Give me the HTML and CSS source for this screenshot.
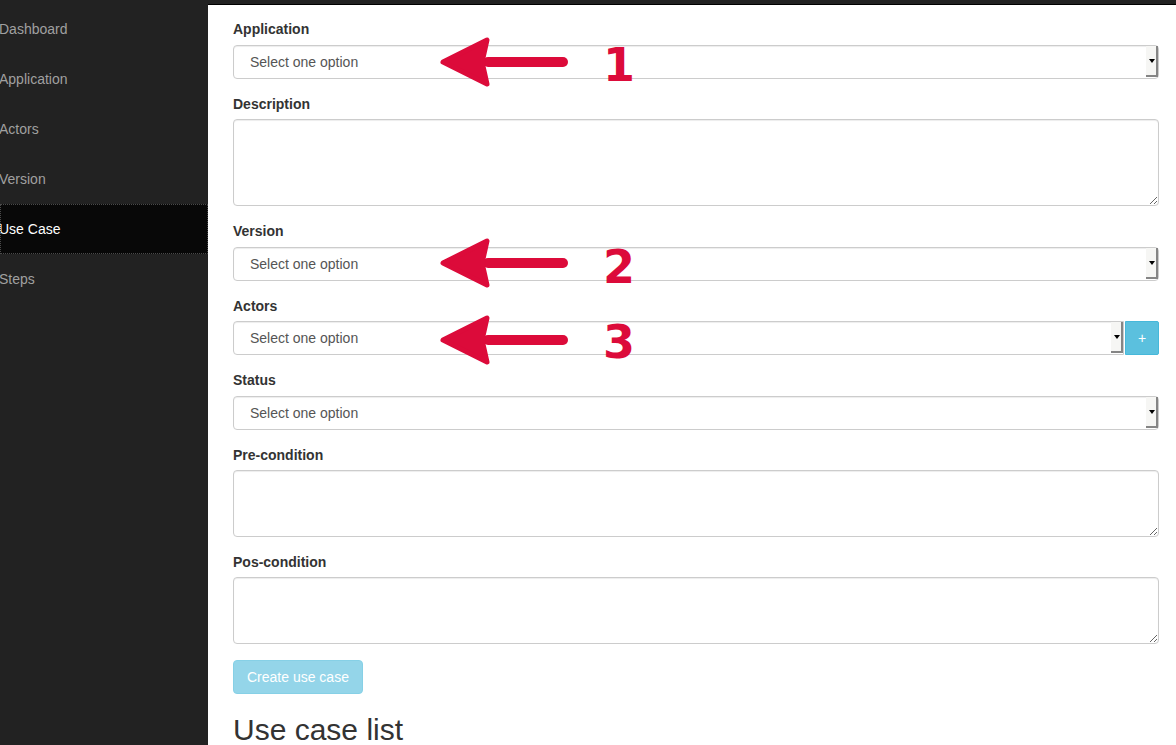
FILE: index.html
```html
<!DOCTYPE html>
<html>
<head>
<meta charset="utf-8">
<title>Use Case</title>
<link rel="stylesheet" href="styles.css">
</head>
<body>
<div class="layout">
  <nav class="sidebar">
    <a class="nav-item">Dashboard</a>
    <a class="nav-item">Application</a>
    <a class="nav-item">Actors</a>
    <a class="nav-item">Version</a>
    <a class="nav-item active">Use Case</a>
    <a class="nav-item">Steps</a>
  </nav>
  <main class="main">
    <form class="form">
      <div class="group">
        <label class="label">Application</label>
        <div class="select"><span class="select-text">Select one option</span><span class="select-btn"><span class="caret"></span></span></div>
      </div>
      <div class="group">
        <label class="label">Description</label>
        <textarea class="textarea tall"></textarea>
      </div>
      <div class="group">
        <label class="label">Version</label>
        <div class="select"><span class="select-text">Select one option</span><span class="select-btn"><span class="caret"></span></span></div>
      </div>
      <div class="group">
        <label class="label">Actors</label>
        <div class="input-group">
          <div class="select joined"><span class="select-text">Select one option</span><span class="select-btn"><span class="caret"></span></span></div>
          <button type="button" class="btn-add">+</button>
        </div>
      </div>
      <div class="group">
        <label class="label">Status</label>
        <div class="select"><span class="select-text">Select one option</span><span class="select-btn"><span class="caret"></span></span></div>
      </div>
      <div class="group">
        <label class="label">Pre-condition</label>
        <textarea class="textarea short"></textarea>
      </div>
      <div class="group">
        <label class="label">Pos-condition</label>
        <textarea class="textarea short"></textarea>
      </div>
      <button type="button" class="btn-create" disabled>Create use case</button>
    </form>
    <h2 class="list-title">Use case list</h2>
  </main>
</div>
<svg class="annotations" width="1176" height="745" viewBox="0 0 1176 745">
  <g class="arrow" transform="translate(0,62)">
    <line x1="488" y1="0" x2="563" y2="0"/>
    <polygon points="443,0 487,-22 483,-4 483,4 487,22"/>
  </g>
  <text class="num" x="619" y="81">1</text>
  <g class="arrow" transform="translate(0,263)">
    <line x1="488" y1="0" x2="563" y2="0"/>
    <polygon points="443,0 487,-22 483,-4 483,4 487,22"/>
  </g>
  <text class="num" x="619" y="283">2</text>
  <g class="arrow" transform="translate(0,340)">
    <line x1="488" y1="0" x2="563" y2="0"/>
    <polygon points="443,0 487,-22 483,-4 483,4 487,22"/>
  </g>
  <text class="num" x="619" y="358">3</text>
</svg>
</body>
</html>
```
FILE: styles.css
```css
html, body {
  margin: 0;
  padding: 0;
  height: 100%;
  overflow: hidden;
}
body {
  background: #222;
  font-family: "Liberation Sans", Arial, sans-serif;
  font-size: 14px;
  line-height: 20px;
  color: #333;
  position: relative;
}
.layout {
  display: flex;
  min-height: 100%;
}
.sidebar {
  width: 208px;
  flex: none;
  padding-top: 4px;
  display: flex;
  flex-direction: column;
}
.nav-item {
  display: block;
  padding: 15px 0;
  line-height: 20px;
  color: #a0a0a0;
  text-indent: -1px;
  text-decoration: none;
}
.nav-item.active {
  background: #080808;
  color: #fff;
  outline: 1px dotted #4a4a4a;
  outline-offset: -1px;
}
.main {
  flex: 1;
  margin-top: 4px;
  border-top: 1px solid #000;
  background: #fff;
  padding: 14px 17px 0 25px;
}
.form {
  display: flex;
  flex-direction: column;
  align-items: flex-start;
}
.group {
  align-self: stretch;
  display: flex;
  flex-direction: column;
  margin-bottom: 15px;
}
.label {
  font-weight: bold;
  line-height: 20px;
  margin-bottom: 5px;
  color: #333;
}
.select {
  box-sizing: border-box;
  height: 34px;
  margin-top: 1px;
  border: 1px solid #ccc;
  border-radius: 4px;
  display: flex;
  align-items: stretch;
  background: #fff;
  box-shadow: inset 0 1px 1px rgba(0,0,0,.075);
}
.select.joined {
  flex: 1;
  margin-top: 0;
  border-radius: 4px 0 0 4px;
}
.select-text {
  flex: 1;
  padding-left: 16px;
  line-height: 32px;
  color: #555;
}
.select-btn {
  box-sizing: border-box;
  width: 12px;
  background: #f6f6f4;
  border-right: 2px solid #858585;
  border-bottom: 2px solid #858585;
  display: flex;
  align-items: center;
  justify-content: center;
  margin-bottom: 1px;
}
.caret {
  width: 0;
  height: 0;
  border-left: 3px solid transparent;
  border-right: 3px solid transparent;
  border-top: 4px solid #000;
  margin-left: 1px;
}
.input-group {
  display: flex;
  align-items: stretch;
  height: 34px;
}
.btn-add {
  width: 34px;
  height: 34px;
  box-sizing: border-box;
  border: 1px solid #46b8da;
  background: #5bc0de;
  color: #fff;
  font-family: "Liberation Sans", Arial, sans-serif;
  font-size: 14px;
  padding: 0;
  border-radius: 0 2px 2px 0;
  margin-left: 1px;
}
.textarea {
  box-sizing: border-box;
  width: 100%;
  border: 1px solid #ccc;
  border-radius: 4px;
  box-shadow: inset 0 1px 1px rgba(0,0,0,.075);
  font-family: "Liberation Sans", Arial, sans-serif;
  font-size: 14px;
  padding: 6px 12px;
  margin: 0;
  display: block;
}
.textarea.tall { height: 87px; }
.textarea.short { height: 67px; }
.btn-create {
  margin-top: 1px;
  padding: 6px 13px;
  font-family: "Liberation Sans", Arial, sans-serif;
  font-size: 14px;
  line-height: 20px;
  color: #fff;
  background: #5bc0de;
  border: 1px solid #46b8da;
  border-radius: 4px;
  opacity: .65;
}
.list-title {
  margin: 19px 0 10px;
  font-size: 30px;
  font-weight: 500;
  line-height: 1.1;
  color: #333;
}
.annotations {
  position: absolute;
  left: 0;
  top: 0;
  pointer-events: none;
}
.arrow line {
  stroke: #dc0b3a;
  stroke-width: 10;
  stroke-linecap: round;
}
.arrow polygon {
  fill: #dc0b3a;
  stroke: #dc0b3a;
  stroke-width: 5;
  stroke-linejoin: round;
}
.num {
  fill: #dc0b3a;
  font-family: "DejaVu Sans", sans-serif;
  font-weight: bold;
  font-size: 46px;
  text-anchor: middle;
}
```
